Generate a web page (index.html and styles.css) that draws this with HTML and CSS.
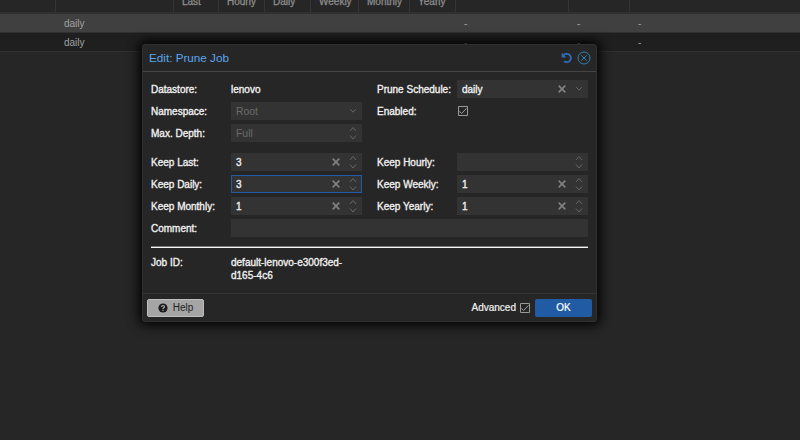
FILE: index.html
```html
<!DOCTYPE html>
<html lang="en">
<head>
    <meta charset="UTF-8">
    <meta name="viewport" content="width=device-width, initial-scale=1.0">
    <title>Prune Jobs</title>
    <link rel="stylesheet" href="styles.css">
</head>
<body>

<svg class="symbols" width="0" height="0">
    <symbol id="clear" viewBox="0 0 10 10"><path d="M1.7 1.7l6.6 6.6M8.3 1.7l-6.6 6.6" fill="none" stroke="currentColor" stroke-width="1.7"/></symbol>
    <symbol id="down" viewBox="0 0 8 14"><path d="M1.2 5.2l2.8 3 2.8-3" fill="none" stroke="currentColor"/></symbol>
    <symbol id="spin" viewBox="0 0 8 14"><path d="M1 5l3-3.5L7 5M1 9.5l3 3.5 3-3.5" fill="none" stroke="currentColor"/></symbol>
    <symbol id="check" viewBox="0 0 10 10"><path d="M.5.5h9v9h-9zM1.3 5.4l2.4 2.1 4.8-5.2" fill="none" stroke="currentColor"/></symbol>
</svg>

<div class="grid">
    <div class="grid-row grid-header">
        <span></span><span></span><span>Last</span><span>Hourly</span><span>Daily</span><span>Weekly</span><span>Monthly</span><span>Yearly</span><span></span><span></span><span></span>
    </div>
    <div class="grid-row selected">
        <span></span><span>daily</span><span></span><span></span><span></span><span></span><span></span><span></span><span>-</span><span>-</span><span>-</span>
    </div>
    <div class="grid-row alt">
        <span></span><span>daily</span><span></span><span></span><span></span><span></span><span></span><span></span><span>-</span><span>-</span><span>-</span>
    </div>
</div>

<div class="window">
    <div class="window-header">
        <h2>Edit: Prune Job</h2>
        <svg class="reset" width="12" height="12" viewBox="0 0 12 12"><path d="M2.4 3.4A4.2 4.2 0 1 1 3 9.3" fill="none" stroke="currentColor" stroke-width="1.8"/><path d="M.7.8v4.6h4.6z" fill="currentColor"/></svg>
        <svg class="close" width="14" height="14" viewBox="0 0 14 14"><circle cx="7" cy="7" r="6" fill="none" stroke="currentColor"/><path d="M4.3 4.3l5.4 5.4M9.7 4.3L4.3 9.7" stroke="currentColor"/></svg>
    </div>

    <div class="window-body">
        <div class="columns">
            <div class="column">
                <div class="field"><label>Datastore:</label><span class="display">lenovo</span></div>
                <div class="field"><label>Namespace:</label><div class="input disabled"><span>Root</span><svg class="trigger"><use href="#down"/></svg></div></div>
                <div class="field"><label>Max. Depth:</label><div class="input disabled"><span>Full</span><svg class="trigger"><use href="#spin"/></svg></div></div>
            </div>
            <div class="column">
                <div class="field"><label>Prune Schedule:</label><div class="input"><span>daily</span><svg class="clear"><use href="#clear"/></svg><svg class="trigger"><use href="#down"/></svg></div></div>
                <div class="field"><label>Enabled:</label><svg class="checkbox"><use href="#check"/></svg></div>
            </div>
        </div>

        <div class="columns keep">
            <div class="column">
                <div class="field"><label>Keep Last:</label><div class="input"><span>3</span><svg class="clear"><use href="#clear"/></svg><svg class="trigger"><use href="#spin"/></svg></div></div>
                <div class="field"><label>Keep Daily:</label><div class="input focus"><span>3</span><svg class="clear"><use href="#clear"/></svg><svg class="trigger"><use href="#spin"/></svg></div></div>
                <div class="field"><label>Keep Monthly:</label><div class="input"><span>1</span><svg class="clear"><use href="#clear"/></svg><svg class="trigger"><use href="#spin"/></svg></div></div>
            </div>
            <div class="column">
                <div class="field"><label>Keep Hourly:</label><div class="input"><span></span><svg class="trigger"><use href="#spin"/></svg></div></div>
                <div class="field"><label>Keep Weekly:</label><div class="input"><span>1</span><svg class="clear"><use href="#clear"/></svg><svg class="trigger"><use href="#spin"/></svg></div></div>
                <div class="field"><label>Keep Yearly:</label><div class="input"><span>1</span><svg class="clear"><use href="#clear"/></svg><svg class="trigger"><use href="#spin"/></svg></div></div>
            </div>
        </div>

        <div class="field comment"><label>Comment:</label><div class="input"></div></div>

        <div class="separator"></div>

        <div class="field job-id"><label>Job ID:</label><span class="display">default-lenovo-e300f3ed-d165-4c6</span></div>
    </div>

    <div class="window-footer">
        <button class="btn help">
            <svg width="10" height="10" viewBox="0 0 10 10"><circle cx="5" cy="5" r="4.6" fill="#1c1c1c"/><path d="M3.5 3.9C3.6 2.1 6.6 2.2 6.5 3.9 6.4 4.8 5 4.8 5 6" fill="none" stroke="#a5a5a5" stroke-width="1.2"/><path d="M4.4 6.8h1.2V8H4.4z" fill="#a5a5a5"/></svg>
            Help
        </button>
        <label class="advanced">Advanced</label>
        <svg class="checkbox"><use href="#check"/></svg>
        <button class="btn ok">OK</button>
    </div>
</div>

</body>
</html>
```
FILE: styles.css
```css
body {
    font-family: "Liberation Sans", Arial, sans-serif;
    font-size: 10px;
    background-color: #262626;
    color: #f0f0f0;
    margin: 0;
    height: 440px;
    overflow: hidden;
}

.symbols {
    position: absolute;
}

.grid-row {
    display: grid;
    grid-template-columns: 56px 118px 45px 46px 46px 48px 51px 46px 113px 61px 1fr;
    box-sizing: border-box;
    height: 19px;
    line-height: 19px;
    border-bottom: 1px solid #303030;
    color: #a0a0a0;
}

.grid-row span {
    padding-left: 8px;
}

.grid-header {
    height: 14px;
    line-height: 3px;
    border-bottom: 2px solid #303030;
    color: #8c8c8c;
    -webkit-text-stroke: 0.3px #8c8c8c;
}

.grid-header span {
    border-right: 1px solid #353535;
}

.grid-header span:last-child {
    border-right: none;
}

.selected {
    background-color: #404040;
}

.alt {
    background-color: #1f1f1f;
}

.window {
    position: absolute;
    left: 142px;
    top: 44px;
    width: 455px;
    height: 278px;
    box-sizing: border-box;
    background-color: #262626;
    border: 1px solid #303030;
    border-radius: 3px;
    box-shadow: 0 0 12px 3px #000;
    display: flex;
    flex-direction: column;
}

.window-header {
    display: flex;
    align-items: center;
    height: 26px;
    padding: 0 5px 0 6px;
    border-bottom: 1px solid #454545;
}

.window-header h2 {
    flex: 1;
    margin: 0;
    padding-bottom: 2px;
    font-size: 11.7px;
    font-weight: normal;
    color: #5ba5ee;
}

.reset {
    color: #2e6cb5;
    margin-right: 4px;
}

.close {
    color: #377fae;
}

.window-body {
    flex: 1;
    padding: 8px 8px 0;
}

.columns {
    display: grid;
    grid-template-columns: 211px 211px;
    column-gap: 15px;
}

.column {
    display: flex;
    flex-direction: column;
    gap: 4px;
}

.keep {
    margin-top: 11px;
}

.field {
    display: flex;
    align-items: center;
    height: 18px;
    -webkit-text-stroke: 0.35px #f0f0f0;
}

.field label {
    width: 80px;
    flex: none;
}

.input {
    flex: 1;
    display: flex;
    align-items: center;
    box-sizing: border-box;
    height: 18px;
    padding: 0 5px;
    background-color: #333;
}

.input span {
    flex: 1;
}

.disabled {
    font-size: 10.4px;
    color: #6b6b6b;
    -webkit-text-stroke: 0;
}

.focus {
    padding: 0 4px;
    border: 1px solid #205ba4;
}

.clear {
    width: 10px;
    height: 10px;
    margin-right: 8px;
    color: #808080;
}

.trigger {
    width: 8px;
    height: 14px;
    color: #666;
}

.checkbox {
    width: 10px;
    height: 10px;
    margin-left: 1px;
    color: #999;
}

.comment {
    width: 437px;
    margin-top: 4px;
}

.separator {
    height: 1px;
    margin-top: 9px;
    background-color: #f5f5f5;
    border-top: 1px solid #777;
}

.job-id {
    align-items: flex-start;
    height: auto;
    margin-top: 8px;
    line-height: 13px;
}

.job-id .display {
    width: 125px;
}

.window-footer {
    display: flex;
    align-items: center;
    height: 27px;
    padding: 0 4px;
    border-top: 1px solid #353535;
}

.btn {
    display: flex;
    align-items: center;
    justify-content: center;
    box-sizing: border-box;
    width: 57px;
    height: 18px;
    padding: 0;
    border: none;
    border-radius: 2px;
    font-family: inherit;
    font-size: 10px;
}

.help {
    gap: 5px;
    background-color: #a5a5a5;
    border: 1px solid #bdbdbd;
    color: #222;
}

.advanced {
    margin-left: auto;
    margin-right: 3px;
    -webkit-text-stroke: 0.2px #f0f0f0;
}

.ok {
    margin-left: 5px;
    background-color: #205ba4;
    color: #fff;
    -webkit-text-stroke: 0.2px #fff;
}
```
